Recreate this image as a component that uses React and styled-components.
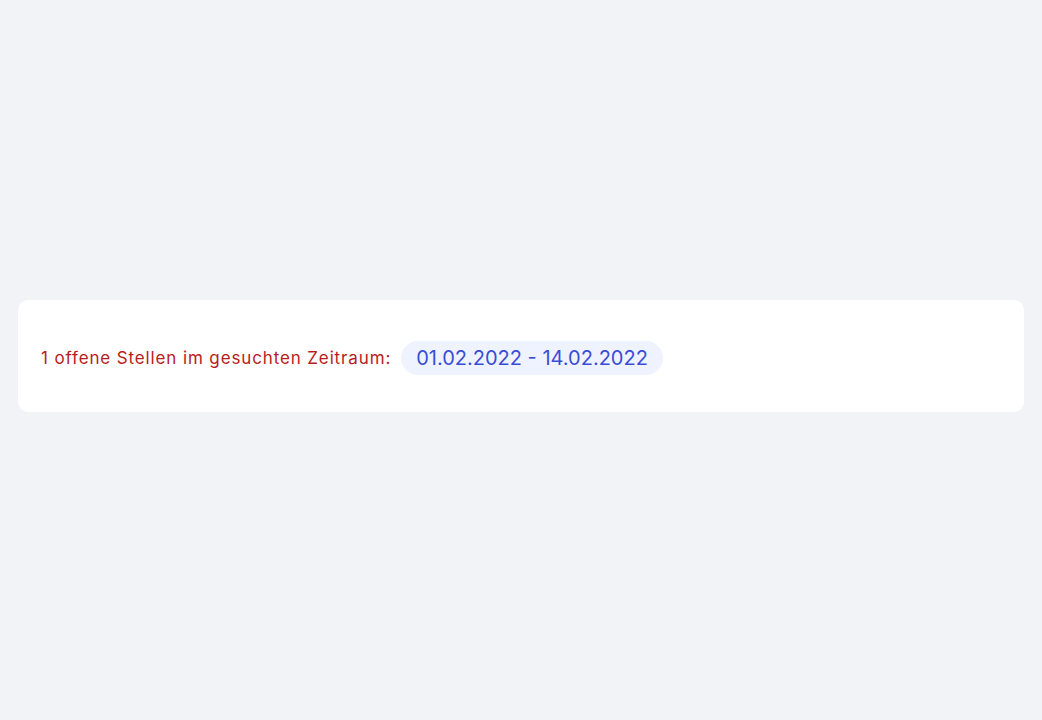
import React from "react"
import styled, { createGlobalStyle } from "styled-components"

const GlobalStyle = createGlobalStyle`
  html, body {
    margin: 0;
    padding: 0;
    background: #f2f3f7;
    font-family: Inter, "Noto Sans", sans-serif;
  }
`

const Page = styled.div`
  min-height: 100vh;
  box-sizing: border-box;
  display: flex;
  flex-direction: column;
  justify-content: center;
  padding: 0 18px 8px;
`

const Card = styled.div`
  background: #fff;
  border-radius: 10px;
  padding: 41px 23px 37px;
  display: flex;
  align-items: center;
  gap: 10px;
`

const Label = styled.span`
  color: #b91c1c;
  font-size: 17px;
  letter-spacing: 0.87px;
  line-height: 24px;
`

const Range = styled.span`
  background: #eff3ff;
  color: #3a4dd8;
  font-size: 20px;
  line-height: 34px;
  padding: 0 15px;
  border-radius: 17px;
`

const App = () => {
  return (
    <Page>
      <GlobalStyle />
      <Card>
        <Label>1 offene Stellen im gesuchten Zeitraum:</Label>
        <Range>01.02.2022 - 14.02.2022</Range>
      </Card>
    </Page>
  )
}

export default App
